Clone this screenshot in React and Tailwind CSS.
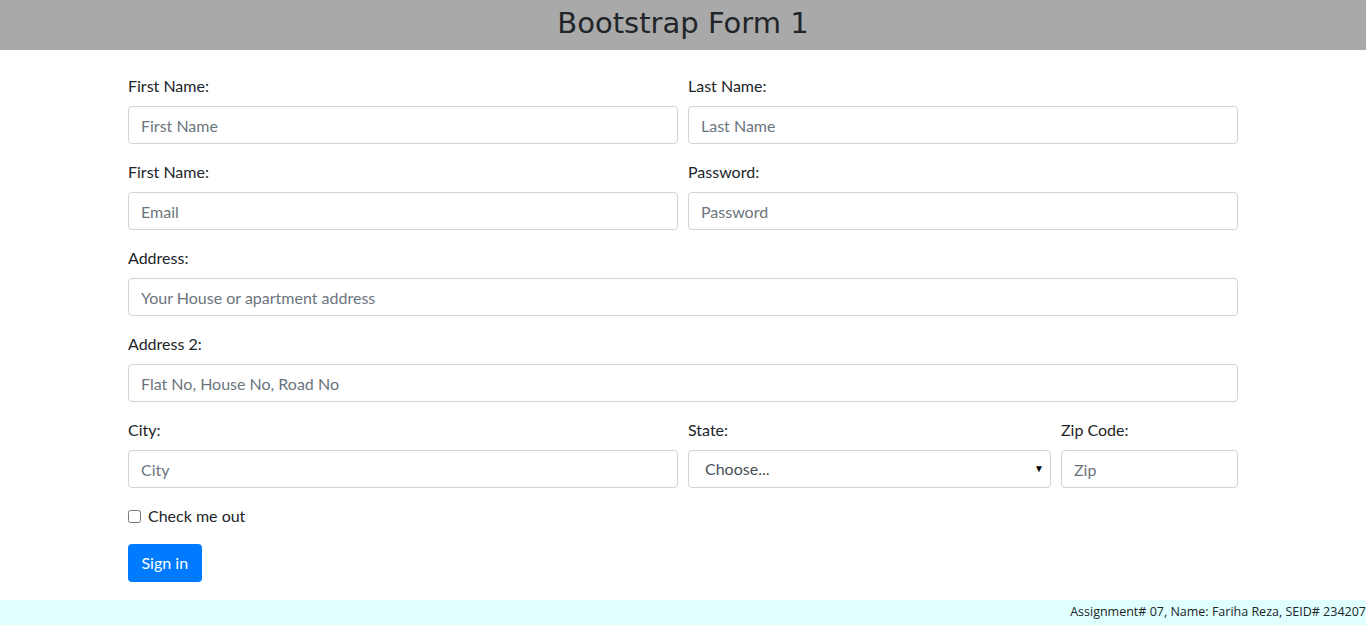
export default function App() {
  const input =
    'w-full h-[38px] px-3 border border-[#ced4da] rounded text-base text-[#495057] placeholder:text-[#6c757d] bg-white outline-none';
  const label = 'block mb-2 leading-6 text-base';

  return (
    <div className="min-h-screen bg-white text-[#212529] font-['Lato',sans-serif]">
      <header className="h-[50px] bg-[#a9a9a9] flex items-center justify-center pb-[4px]">
        <h1 className="text-[29px] font-['DejaVu_Sans',sans-serif] leading-none">Bootstrap Form 1</h1>
      </header>

      <form className="w-[1110px] mx-auto pt-6 pb-[18px]">
        <div className="grid grid-cols-2 gap-x-[10px]">
          <div className="mb-4">
            <label className={label}>First Name:</label>
            <input className={input} placeholder="First Name" />
          </div>
          <div className="mb-4">
            <label className={label}>Last Name:</label>
            <input className={input} placeholder="Last Name" />
          </div>
          <div className="mb-4">
            <label className={label}>First Name:</label>
            <input className={input} placeholder="Email" />
          </div>
          <div className="mb-4">
            <label className={label}>Password:</label>
            <input className={input} type="password" placeholder="Password" />
          </div>
        </div>

        <div className="mb-4">
          <label className={label}>Address:</label>
          <input className={input} placeholder="Your House or apartment address" />
        </div>
        <div className="mb-4">
          <label className={label}>Address 2:</label>
          <input className={input} placeholder="Flat No, House No, Road No" />
        </div>

        <div className="grid grid-cols-[550px_363px_177px] gap-x-[10px]">
          <div className="mb-4">
            <label className={label}>City:</label>
            <input className={input} placeholder="City" />
          </div>
          <div className="mb-4">
            <label className={label}>State:</label>
            <div className="relative">
              <select className="w-full h-[38px] pl-4 pr-6 border border-[#ced4da] rounded text-base text-[#495057] bg-white appearance-none outline-none">
                <option>Choose...</option>
                <option>...</option>
              </select>
              <span className="absolute right-[7px] top-[11px] text-[10px] text-black pointer-events-none">▼</span>
            </div>
          </div>
          <div className="mb-4">
            <label className={label}>Zip Code:</label>
            <input className={input} placeholder="Zip" />
          </div>
        </div>

        <div className="mb-4 flex items-center h-6">
          <input type="checkbox" className="w-[13px] h-[13px] m-0 mr-[7px]" />
          <label className="leading-6 text-base">Check me out</label>
        </div>

        <button type="button" className="h-[38px] px-[13.5px] rounded bg-[#007bff] text-white text-base">
          Sign in
        </button>
      </form>

      <footer className="h-[25px] bg-[#e0ffff] flex items-center justify-end text-[12.5px] font-['Open_Sans',sans-serif]">
        Assignment# 07, Name: Fariha Reza, SEID# 234207
      </footer>
    </div>
  );
}
